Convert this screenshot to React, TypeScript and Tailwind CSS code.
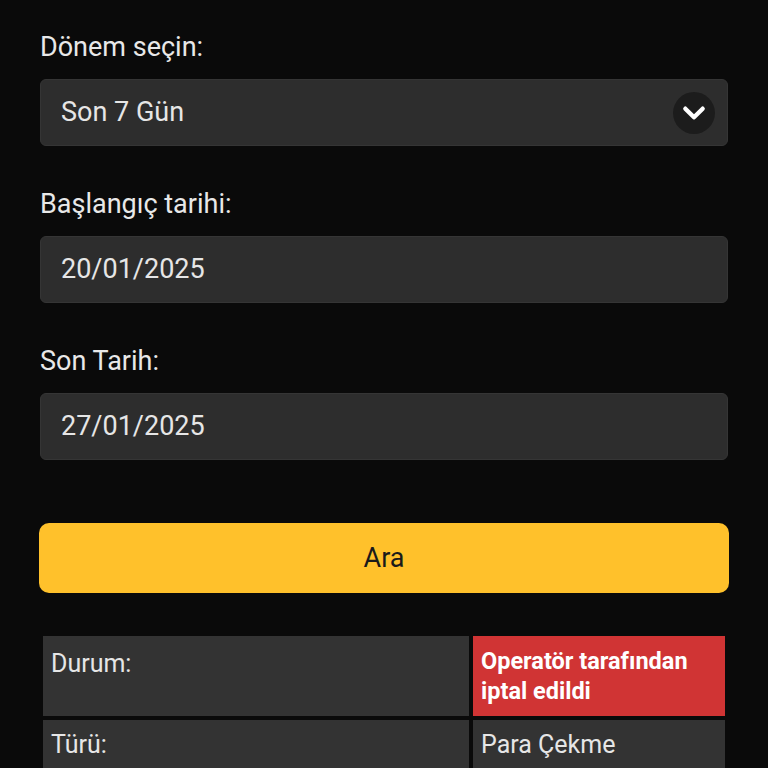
import React from 'react';

const font = { fontFamily: 'Roboto, "Noto Sans", sans-serif' };

// -- Chevron circle for the select --
const Chevron = () => (
  <div className="w-[42px] h-[42px] rounded-full bg-[#1c1c1c] flex items-center justify-center">
    <svg width="26" height="26" viewBox="0 0 24 24" fill="none">
      <path d="M4 8l8 8 8-8" stroke="#fff" strokeWidth="4" strokeLinecap="round" strokeLinejoin="round" />
    </svg>
  </div>
);

const Field = ({ label, value, select }: { label: string; value: string; select?: boolean }) => (
  <div className="flex flex-col">
    <label className="text-[27px] leading-[32px] text-[#e8e8e8] mb-[16px]">{label}</label>
    <div className="h-[67px] rounded-[6px] bg-[#2d2d2d] border border-[#353535] pl-[20px] pr-[12px] flex items-center justify-between">
      <span className="text-[27px] text-[#e6e6e6]">{value}</span>
      {select && <Chevron />}
    </div>
  </div>
);

const App: React.FC = () => {
  return (
    <div className="min-h-screen bg-[#0a0a0a] text-white" style={font}>
      <div className="px-10 pt-[31px] flex flex-col">
        <div className="flex flex-col gap-[42px]">
          <Field label="Dönem seçin:" value="Son 7 Gün" select />
          <Field label="Başlangıç tarihi:" value="20/01/2025" />
          <Field label="Son Tarih:" value="27/01/2025" />
        </div>

        <button className="mt-[63px] -mx-px h-[70px] rounded-[10px] bg-[#ffc12b] text-[#1a1a1a] text-[27px]">
          Ara
        </button>

        {/* -- Result table -- */}
        <div className="mt-[43px] mx-[3px] grid grid-cols-[426px_1fr] gap-[4px]">
          <div className="bg-[#333333] h-[80px] px-[8px] pt-[9px] text-[25px] text-[#e6e6e6]">Durum:</div>
          <div className="bg-[#d03434] h-[80px] px-[8px] pt-[10px] text-[23.5px] leading-[30px] font-bold text-white">
            Operatör tarafından iptal edildi
          </div>
          <div className="bg-[#333333] h-[60px] px-[8px] pt-[6px] text-[25px] text-[#e6e6e6]">Türü:</div>
          <div className="bg-[#333333] h-[60px] px-[8px] pt-[6px] text-[25px] text-[#e6e6e6]">Para Çekme</div>
        </div>
      </div>
    </div>
  );
};

export default App;
